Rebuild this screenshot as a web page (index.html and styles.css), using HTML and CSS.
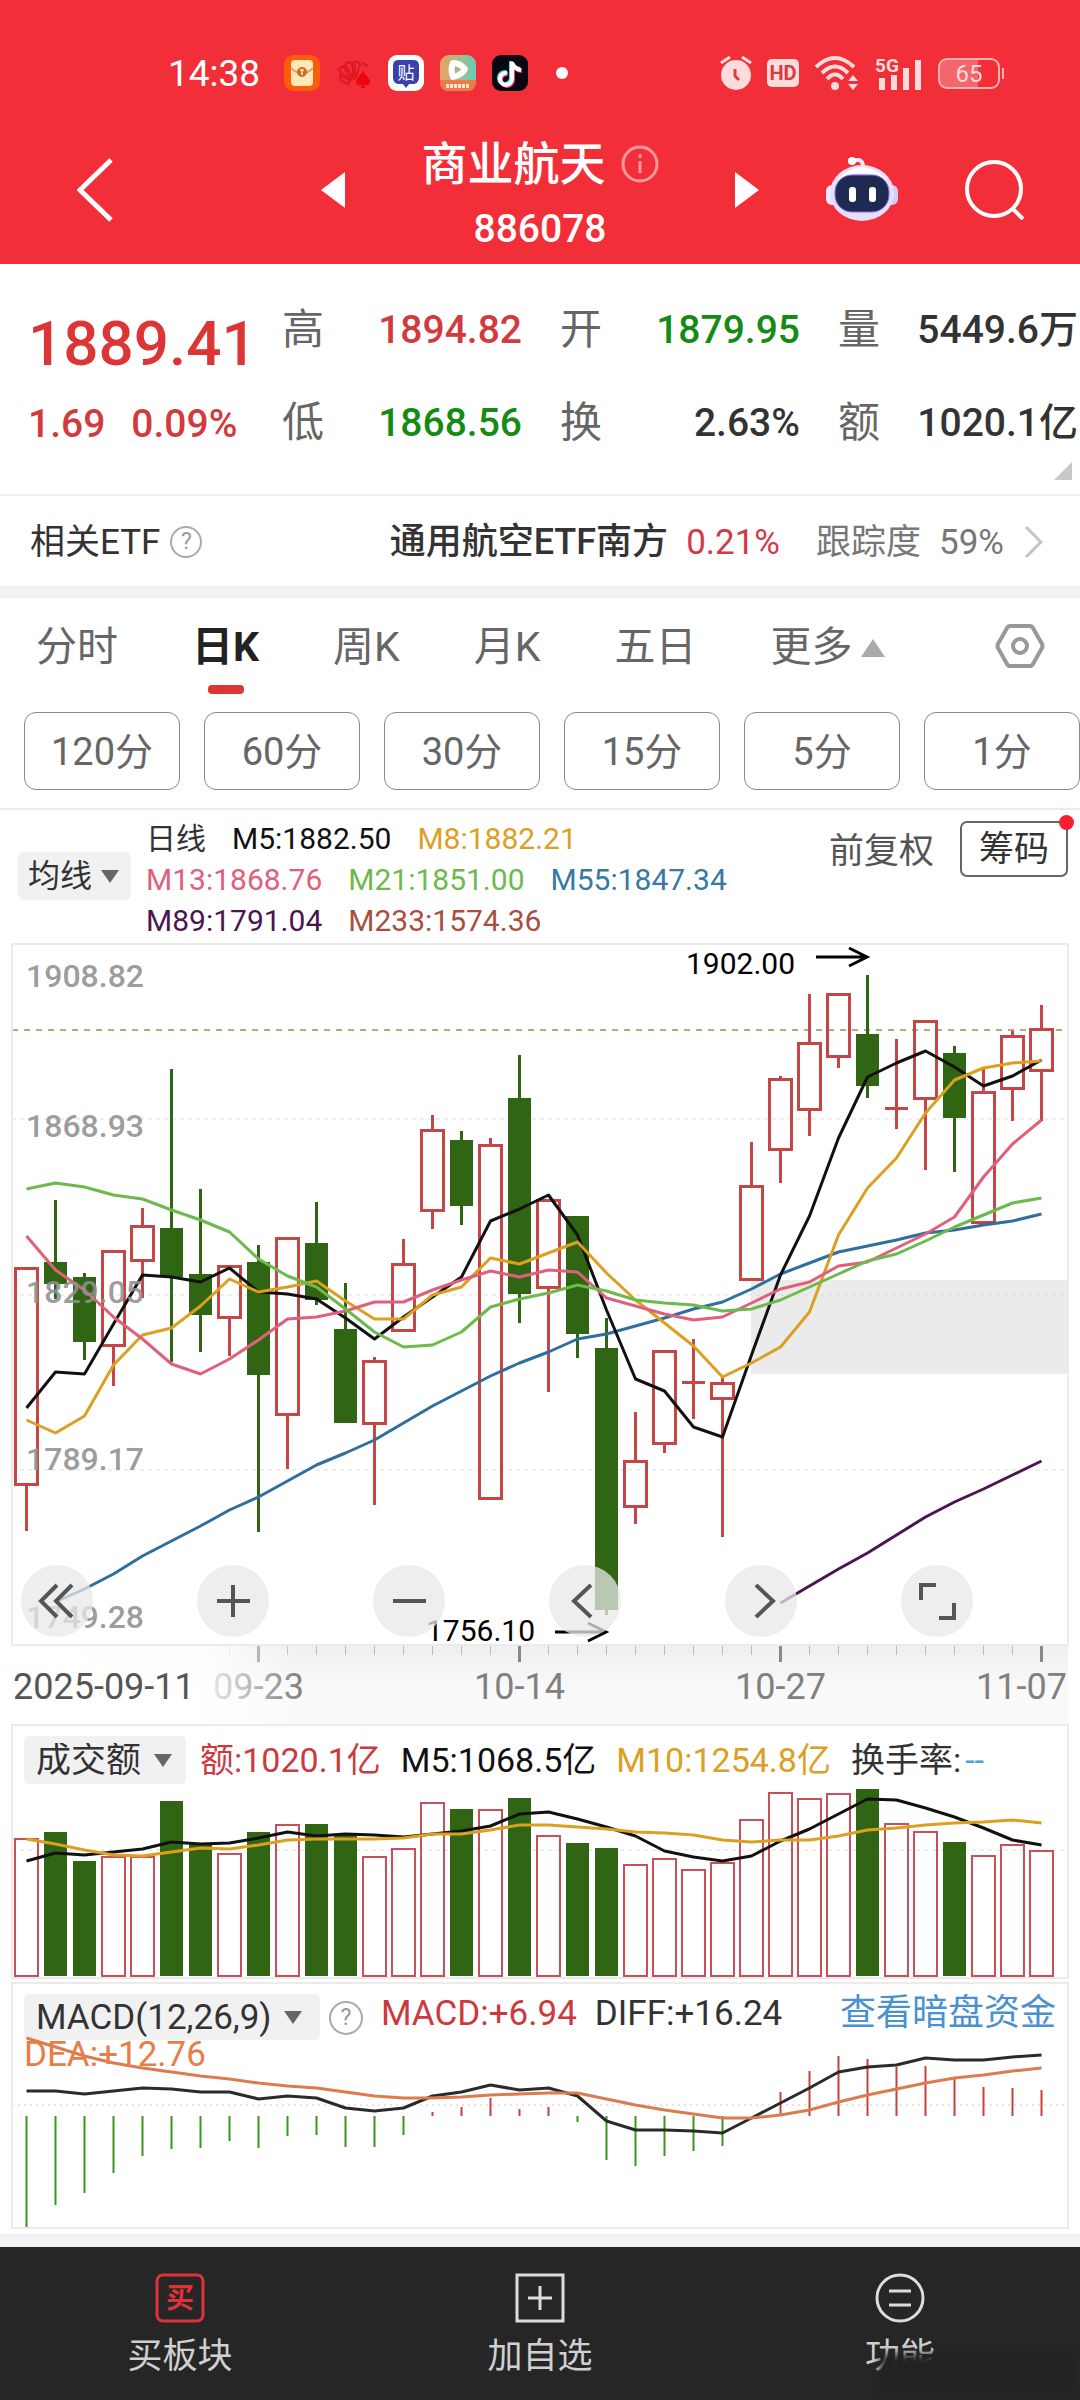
FILE: index.html
```html
<!DOCTYPE html>
<html lang="zh-CN">
<head>
    <meta charset="UTF-8">
    <meta name="viewport" content="width=device-width, initial-scale=1.0">
    <title>商业航天 886078</title>
    <link rel="stylesheet" href="styles.css">
</head>
<body>
    <header class="app-header">
        <div class="status-bar">
            <div class="status-left">
                <span class="clock">14:38</span>
                <svg class="app-icon" viewBox="0 0 36 36"><rect width="36" height="36" rx="9" fill="#fb5d0c"/><rect x="7" y="5" width="22" height="26" rx="4" fill="#ffe9b5"/><path d="M7 13 Q18 24 29 13" fill="none" stroke="#d9a45c" stroke-width="2"/><circle cx="18" cy="17" r="5" fill="#cf6a2b"/><path d="M16 15h4M18 15v5" stroke="#ffe9b5" stroke-width="1.5"/></svg>
                <svg class="app-icon" viewBox="0 0 36 36"><g fill="none" stroke="#e01525" stroke-width="2" stroke-linejoin="round"><path d="M12 29 L5 26 L4 20 L14 26Z"/><path d="M5 18 L3 14 L7 11 L16 25Z"/><path d="M9 10 L12 7 L16 8 L18 24Z"/><path d="M18 7 L23 7 L24 10 L20 22Z"/><path d="M26 8 L32 11"/></g><path d="M27 16 C24 21 20 23 20 27 c0 4 5 4 6 2 l-1 4h4l-1-4c1 2 6 2 6-2 0-4-4-6-7-11Z" fill="#ee0510"/></svg>
                <svg class="app-icon" viewBox="0 0 36 36"><rect width="36" height="36" rx="9" fill="#fff"/><path d="M10 5h16q5 0 5 6v11q0 6-5 7h-5l-3 4-3-4h-5q-5-1-5-7V11q0-6 5-6Z" fill="#3a3fae"/><text class="icon-char" x="18" y="24" text-anchor="middle">贴</text></svg>
                <svg class="app-icon" viewBox="0 0 36 36"><defs><linearGradient id="play" x1="0" y1="0" x2="1" y2="0"><stop offset="0" stop-color="#f0a062"/><stop offset="1" stop-color="#63d0b4"/></linearGradient></defs><rect width="36" height="36" rx="9" fill="url(#play)"/><path d="M0 25h36v2q0 9-9 9H9q-9 0-9-9Z" fill="#ee7a45"/><path d="M13 8 Q10 15 13 22 Q22 20 25 14 Q20 8 13 8Z" fill="none" stroke="#fff" stroke-width="6" stroke-linejoin="round"/><path d="M6 31h24" stroke="#ffe6d5" stroke-width="4" stroke-dasharray="3 1"/></svg>
                <svg class="app-icon" viewBox="0 0 36 36"><rect width="36" height="36" rx="9" fill="#0a0712"/><g fill="none" stroke-width="4"><path d="M19 6v17a6 6 0 1 1-5-6M19 7q2 6 9 7" stroke="#37e3df"/><path d="M21 8v17a6 6 0 1 1-5-6M21 9q2 6 9 7" stroke="#f5386a"/><path d="M20 7v17a6 6 0 1 1-5-6M20 8q2 6 9 7" stroke="#fff"/></g></svg>
                <span class="status-dot"></span>
            </div>
            <div class="status-right">
                <svg width="32" height="36" viewBox="0 0 32 36"><circle cx="16" cy="20" r="15" fill="#ffdcdc"/><path d="M1 8l9-6M31 8l-9-6" stroke="#ffdcdc" stroke-width="3"/><path d="M15 14v7l4 4" fill="none" stroke="#d93b41" stroke-width="3"/></svg>
                <span class="hd">HD</span>
                <svg width="46" height="36" viewBox="0 0 46 36"><g fill="none" stroke="#ffdcdc" stroke-width="4"><path d="M2 12Q21-6 40 12"/><path d="M8 18Q21 5 34 18"/><path d="M13 24Q21 15 29 24"/></g><circle cx="21" cy="31" r="4" fill="#ffdcdc"/><path d="M34 26l5-6 5 6zM34 29l5 6 5-6z" fill="#ffdcdc"/></svg>
                <svg width="48" height="36" viewBox="0 0 48 36"><path d="M4 23h6v12H4zM16 20h6v15h-6zM28 13h6v22h-6zM40 5h6v30h-6z" fill="#ffdcdc"/><text class="net" x="0" y="17">5G</text></svg>
                <span class="battery">65</span>
            </div>
        </div>

        <div class="title-bar">
            <div class="title-side">
                <button class="icon-btn" aria-label="返回"><svg width="36" height="64" viewBox="0 0 36 64"><path d="M34 2 L3 32 L34 62" fill="none" stroke="#fff" stroke-width="5"/></svg></button>
                <button class="icon-btn" aria-label="上一个"><svg width="24" height="36" viewBox="0 0 24 36"><path d="M24 0v36L0 18z" fill="#fff"/></svg></button>
            </div>
            <div class="title-main">
                <h1>商业航天
                    <svg width="38" height="38" viewBox="0 0 38 38"><circle cx="19" cy="19" r="17" fill="none" stroke="#ff9a9c" stroke-width="3"/><path d="M19 16v12M19 9v4" stroke="#ff9a9c" stroke-width="3"/></svg>
                </h1>
                <p>886078</p>
            </div>
            <div class="title-side">
                <button class="icon-btn" aria-label="下一个"><svg width="24" height="36" viewBox="0 0 24 36"><path d="M0 0v36l24-18z" fill="#fff"/></svg></button>
                <button class="icon-btn" aria-label="智能助手">
                    <svg width="72" height="70" viewBox="0 0 72 70">
                        <path d="M27 6 Q38 2 37 14" fill="none" stroke="#f3e9ff" stroke-width="4"/><circle cx="26" cy="6" r="4" fill="#fff"/>
                        <rect x="0" y="30" width="14" height="20" rx="6" fill="#f1edff"/><rect x="58" y="30" width="14" height="20" rx="6" fill="#d5cbf5"/>
                        <ellipse cx="36" cy="38" rx="32" ry="28" fill="#e4e0fb"/>
                        <path d="M12 24 Q36 0 60 24 Q36 12 12 24Z" fill="#fff"/>
                        <rect x="9" y="20" width="54" height="37" rx="17" fill="#1e2a50" stroke="#8b6be8" stroke-width="1"/>
                        <rect x="23" y="32" width="7" height="15" rx="3" fill="#fff"/><rect x="43" y="32" width="7" height="15" rx="3" fill="#fff"/>
                    </svg>
                </button>
                <button class="icon-btn" aria-label="搜索"><svg width="60" height="60" viewBox="0 0 60 60"><circle cx="29" cy="29" r="27" fill="none" stroke="#fff" stroke-width="4"/><path d="M47 48 L58 59" stroke="#fff" stroke-width="4"/></svg></button>
            </div>
        </div>
    </header>

    <main>
        <section class="quote">
            <div class="quote-price">
                <strong class="price-now">1889.41</strong>
                <div class="price-change"><span>1.69</span><span>0.09%</span></div>
            </div>
            <dl class="quote-col">
                <div><dt>高</dt><dd class="up">1894.82</dd></div>
                <div><dt>低</dt><dd class="down">1868.56</dd></div>
            </dl>
            <dl class="quote-col">
                <div><dt>开</dt><dd class="down">1879.95</dd></div>
                <div><dt>换</dt><dd>2.63%</dd></div>
            </dl>
            <dl class="quote-col">
                <div><dt>量</dt><dd>5449.6万</dd></div>
                <div><dt>额</dt><dd>1020.1亿</dd></div>
            </dl>
        </section>

        <a href="#etf" class="etf-row">
            <span>相关ETF</span>
            <span class="help">?</span>
            <span class="etf-name">通用航空ETF南方</span>
            <span class="etf-rate">0.21%</span>
            <span class="etf-track">跟踪度</span>
            <span class="etf-percent">59%</span>
            <svg width="19" height="32" viewBox="0 0 19 32"><path d="M2 1 L17 16 L2 31" fill="none" stroke="#c4c4c4" stroke-width="3"/></svg>
        </a>

        <nav class="tabs">
            <button>分时</button>
            <button class="active">日K</button>
            <button>周K</button>
            <button>月K</button>
            <button>五日</button>
            <button class="more">更多</button>
            <button class="settings" aria-label="设置"><svg width="50" height="46" viewBox="0 0 50 46"><path d="M15 3h20q2 0 3 2l9 16q1 2 0 4l-9 16q-1 2-3 2H15q-2 0-3-2L3 25q-1-2 0-4l9-16q1-2 3-2Z" fill="none" stroke="#999" stroke-width="4"/><circle cx="25" cy="23" r="7" fill="none" stroke="#999" stroke-width="4"/></svg></button>
        </nav>

        <div class="periods">
            <button>120分</button>
            <button>60分</button>
            <button>30分</button>
            <button>15分</button>
            <button>5分</button>
            <button>1分</button>
        </div>

        <section class="legend">
            <label class="pick"><select aria-label="主图指标"><option>均线</option></select></label>
            <div class="ma-list">
                <div class="ma-row"><span>日线</span><span class="c-black">M5:1882.50</span><span class="c-gold">M8:1882.21</span></div>
                <div class="ma-row"><span class="c-pink">M13:1868.76</span><span class="c-green">M21:1851.00</span><span class="c-blue">M55:1847.34</span></div>
                <div class="ma-row"><span class="c-purple">M89:1791.04</span><span class="c-brown">M233:1574.36</span></div>
            </div>
            <button class="adjust">前复权</button>
            <button class="chips">筹码</button>
        </section>

        <section class="chart-panel">
            <svg id="kChart" viewBox="0 0 1056 701"></svg>
            <div class="chart-tools">
                <button aria-label="最早"><svg viewBox="0 0 72 72"><path d="M36 20 L20 36 L36 52M51 20 L35 36 L51 52"/></svg></button>
                <button aria-label="放大"><svg viewBox="0 0 72 72"><path d="M36 20v32M20 36h33"/></svg></button>
                <button aria-label="缩小"><svg viewBox="0 0 72 72"><path d="M20 36h33"/></svg></button>
                <button aria-label="左移"><svg viewBox="0 0 72 72"><path d="M42 20 L25 36 L42 52"/></svg></button>
                <button aria-label="右移"><svg viewBox="0 0 72 72"><path d="M31 20 L48 36 L31 52"/></svg></button>
                <button aria-label="全屏"><svg viewBox="0 0 72 72"><path d="M20 35V20h15M38 53h15V38"/></svg></button>
            </div>
        </section>
        <svg id="axis" class="axis" viewBox="0 0 1056 79"></svg>

        <section class="chart-panel vol-panel">
            <div class="panel-head">
                <label class="pick"><select aria-label="副图一"><option>成交额</option></select></label>
                <span class="c-red">额:1020.1亿</span>
                <span class="c-black">M5:1068.5亿</span>
                <span class="c-gold">M10:1254.8亿</span>
                <span class="turnover">换手率:<span class="dashes">--</span></span>
            </div>
            <svg id="volChart" viewBox="0 0 1056 193"></svg>
        </section>

        <section class="chart-panel macd-panel">
            <div class="panel-head">
                <label class="pick"><select aria-label="副图二"><option>MACD(12,26,9)</option></select></label>
                <span class="help">?</span>
                <span class="c-red">MACD:+6.94</span>
                <span class="diff">DIFF:+16.24</span>
                <a href="#funds">查看暗盘资金</a>
            </div>
            <svg id="macdChart" viewBox="0 0 1056 195"></svg>
        </section>
    </main>

    <footer class="bottom-nav">
        <button>
            <svg width="50" height="50" viewBox="0 0 50 50"><rect x="2" y="2" width="46" height="46" rx="6" fill="none" stroke="#e0323b" stroke-width="3"/><text class="buy-char" x="25" y="35" text-anchor="middle">买</text></svg>
            买板块
        </button>
        <button>
            <svg width="50" height="50" viewBox="0 0 50 50"><path d="M2 2h46v46H2zM25 13v24M13 25h24" fill="none" stroke="#dcdcdc" stroke-width="3"/></svg>
            加自选
        </button>
        <button>
            <svg width="50" height="50" viewBox="0 0 50 50"><circle cx="25" cy="25" r="23" fill="none" stroke="#dcdcdc" stroke-width="3"/><path d="M14 18h22M14 32h22" stroke="#dcdcdc" stroke-width="3"/></svg>
            功能
        </button>
        <span class="nav-shade"></span>
    </footer>

    <script src="script.js"></script>
</body>
</html>
```

FILE: styles.css
```css
* {
    margin: 0;
    padding: 0;
    box-sizing: border-box;
}

body {
    font-family: Roboto, "Noto Sans CJK SC", sans-serif;
    background: #fff;
    color: #333;
    line-height: 1;
}

button, select {
    font: inherit;
    color: inherit;
    background: none;
    border: none;
}

a {
    color: inherit;
    text-decoration: none;
}

svg {
    display: block;
}

/* header */
.app-header {
    background: #f22f38;
    color: #fff;
    height: 264px;
    padding-top: 51px;
}

.status-bar {
    display: flex;
    justify-content: space-between;
    align-items: center;
    height: 44px;
    padding: 0 80px 0 168px;
}

.status-left, .status-right {
    display: flex;
    align-items: center;
}

.status-left {
    gap: 16px;
}

.clock {
    font-size: 37px;
    margin-right: 8px;
}

.app-icon {
    width: 36px;
    height: 36px;
}

.icon-char {
    font-size: 17px;
    fill: #fff;
}

.status-dot {
    width: 12px;
    height: 12px;
    margin-left: 12px;
    border-radius: 50%;
    background: #fff;
}

.status-right {
    gap: 15px;
    color: #ffdcdc;
}

.hd {
    width: 32px;
    height: 28px;
    border-radius: 5px;
    background: #ffdcdc;
    color: #d93b41;
    font-size: 20px;
    font-weight: 700;
    line-height: 28px;
    text-align: center;
}

.net {
    font-size: 19px;
    font-weight: 700;
    fill: #ffdcdc;
}

.battery {
    position: relative;
    width: 62px;
    height: 31px;
    border: 2px solid #ffb3b5;
    border-radius: 9px;
    background: linear-gradient(90deg, #f5666c 65%, transparent 65%);
    font-size: 24px;
    line-height: 28px;
    text-align: center;
}

.battery::after {
    content: "";
    position: absolute;
    top: 8px;
    right: -6px;
    width: 2px;
    height: 11px;
    background: #ffb3b5;
}

.title-bar {
    display: grid;
    grid-template-columns: 268px 1fr 290px;
    align-items: center;
    height: 160px;
    margin-top: 15px;
    padding: 0 55px 0 77px;
}

.title-side {
    display: flex;
    align-items: center;
    justify-content: space-between;
}

.title-main {
    padding-top: 8px;
    text-align: center;
}

.title-main h1 {
    display: flex;
    align-items: center;
    justify-content: center;
    gap: 15px;
    font-size: 46px;
    font-weight: 500;
    line-height: 60px;
}

.title-main p {
    margin-top: 9px;
    font-size: 39px;
    font-weight: 500;
    line-height: 52px;
}

/* quote */
.quote {
    position: relative;
    display: grid;
    grid-template-columns: minmax(0, 1fr) 240px 240px 240px;
    column-gap: 38px;
    height: 232px;
    padding: 34px 2px 0 28px;
    border-bottom: 2px solid #eee;
}

.quote::after {
    content: "";
    position: absolute;
    right: 8px;
    bottom: 14px;
    border-left: 18px solid transparent;
    border-bottom: 18px solid #c8c8c8;
}

.price-now {
    display: block;
    font-size: 62px;
    font-weight: 500;
    line-height: 92px;
    color: #dd3435;
}

.price-change {
    display: flex;
    gap: 26px;
    font-size: 39px;
    font-weight: 500;
    line-height: 68px;
    white-space: nowrap;
    color: #d23a3d;
}

.quote-col div {
    display: flex;
    justify-content: space-between;
    height: 93px;
    line-height: 64px;
}

.quote-col dt {
    font-size: 42px;
    color: #666;
}

.quote-col dd {
    font-size: 39px;
    font-weight: 500;
}

.quote-col .up {
    color: #d23a3d;
}

.quote-col .down {
    color: #148c14;
}

/* related etf */
.etf-row {
    display: flex;
    align-items: center;
    height: 102px;
    padding: 2px 37px 0 30px;
    border-bottom: 12px solid #f3f3f3;
    font-size: 35px;
}

.help {
    width: 32px;
    height: 32px;
    border: 2px solid #aaa;
    border-radius: 50%;
    font-size: 23px;
    line-height: 28px;
    text-align: center;
    color: #999;
}

.etf-row .help {
    margin-left: 10px;
}

.etf-name {
    margin-left: auto;
    font-size: 36px;
    font-weight: 500;
}

.etf-rate {
    margin-left: 18px;
    color: #d23a4a;
}

.etf-track {
    margin-left: 36px;
    color: #777;
}

.etf-percent {
    margin: 0 20px 0 18px;
    color: #777;
}

/* tabs */
.tabs {
    display: flex;
    align-items: center;
    gap: 74px;
    height: 96px;
    padding: 0 35px 0 36px;
    font-size: 41px;
    color: #666;
}

.tabs button {
    position: relative;
    height: 96px;
    padding-top: 3px;
}

.tabs .active {
    color: #222;
    font-weight: 700;
}

.tabs .active::after {
    content: "";
    position: absolute;
    bottom: 0;
    left: 50%;
    width: 36px;
    height: 9px;
    margin-left: -18px;
    border-radius: 4px;
    background: #dd3435;
}

.tabs .more {
    display: flex;
    align-items: center;
    gap: 8px;
}

.more::after {
    content: "";
    border: 12px solid transparent;
    border-top: none;
    border-bottom: 18px solid #aaa;
}

.tabs .settings {
    margin-left: auto;
    padding-top: 0;
}

/* minute periods */
.periods {
    display: flex;
    gap: 24px;
    padding: 18px 0 18px 24px;
    overflow: hidden;
    border-bottom: 2px solid #eaeaea;
}

.periods button {
    flex: 0 0 156px;
    height: 78px;
    padding-top: 2px;
    border: 1px solid #888;
    border-radius: 12px;
    font-size: 38px;
    color: #666;
}

/* drop-downs */
.pick {
    display: flex;
    align-items: center;
    gap: 8px;
    height: 48px;
    padding: 0 12px 0 10px;
    border-radius: 5px;
    background: #f1f1f1;
}

.pick select {
    appearance: none;
    color: #333;
}

.pick::after {
    content: "";
    border: 9px solid transparent;
    border-bottom: none;
    border-top: 13px solid #666;
}

/* moving average legend */
.legend {
    display: flex;
    align-items: flex-start;
    height: 134px;
    padding: 8px 12px 0 18px;
    font-size: 30px;
}

.legend .pick {
    margin-top: 34px;
    font-size: 32px;
}

.ma-list {
    margin-left: 15px;
}

.ma-row {
    display: flex;
    gap: 26px;
    height: 41px;
    line-height: 41px;
}

.adjust {
    margin: 16px 26px 0 auto;
    font-size: 35px;
    color: #555;
}

.chips {
    position: relative;
    width: 108px;
    height: 56px;
    margin-top: 3px;
    border: 2px solid #666;
    border-radius: 7px;
    font-size: 35px;
}

.chips::after {
    content: "";
    position: absolute;
    top: -8px;
    right: -8px;
    width: 15px;
    height: 15px;
    border-radius: 50%;
    background: #f8202f;
}

.c-black { color: #111; }
.c-gold { color: #dba01f; }
.c-pink { color: #e0607b; }
.c-green { color: #6cba4c; }
.c-blue { color: #3878a4; }
.c-purple { color: #4b1650; }
.c-brown { color: #a84f3e; }
.c-red { color: #cc3a3e; }

/* charts */
.chart-panel {
    position: relative;
    margin: 0 12px;
    outline: 2px solid #ebebeb;
    outline-offset: -1px;
}

.chart-panel > svg {
    width: 100%;
    height: auto;
}

.chart-tools {
    position: absolute;
    left: 9px;
    right: 95px;
    bottom: 8px;
    display: flex;
    justify-content: space-between;
}

.chart-tools button {
    width: 72px;
    height: 72px;
    border-radius: 50%;
    background: rgba(232, 232, 232, 0.75);
}

.chart-tools path {
    fill: none;
    stroke: #555;
    stroke-width: 4;
}

.axis {
    width: calc(100% - 24px);
    margin: 0 12px;
    background: linear-gradient(180deg, #efefef, #fafafa 60%);
}

.panel-head {
    display: flex;
    align-items: center;
    height: 60px;
    padding: 10px 12px 0;
    font-size: 35px;
    white-space: nowrap;
}

.panel-head .pick {
    gap: 12px;
    padding: 0 14px 0 12px;
}

.vol-panel {
    margin-top: 1px;
}

.vol-panel .panel-head {
    font-size: 34px;
}

.vol-panel .pick {
    margin-right: 14px;
    font-size: 35px;
}

.vol-panel .c-black, .vol-panel .c-gold, .turnover {
    margin-left: 20px;
}

.dashes {
    margin-left: 4px;
    color: #4aa3d0;
}

.macd-panel {
    margin-top: 5px;
}

.macd-panel .panel-head {
    height: 50px;
    padding-top: 0;
    align-items: flex-start;
    line-height: 61px;
}

.macd-panel .pick {
    height: 46px;
    margin-top: 11px;
    padding-right: 18px;
}

.macd-panel .help {
    width: 34px;
    height: 34px;
    margin: 18px 18px 0 9px;
    line-height: 30px;
}

.macd-panel .diff {
    margin-left: 18px;
}

.macd-panel a {
    margin-left: auto;
    font-size: 36px;
    color: #4b91cf;
}

.axis-price {
    font-size: 32px;
    font-weight: 500;
    fill: #909090;
    fill-opacity: 0.9;
}

.mark-price {
    font-size: 30px;
    fill: #000;
}

.axis-date {
    font-size: 36px;
    fill: #808080;
}

.axis-date.first {
    fill: #555;
}

.dea {
    font-size: 35px;
    fill: #e87d48;
}

/* bottom nav */
.bottom-nav {
    position: relative;
    display: flex;
    height: 166px;
    margin-top: 6px;
    border-top: 13px solid #f3f3f3;
    background: #262626;
    overflow: hidden;
}

.bottom-nav button {
    flex: 1;
    display: flex;
    flex-direction: column;
    align-items: center;
    gap: 16px;
    padding-top: 26px;
    font-size: 35px;
    color: #d0d0d0;
}

.buy-char {
    font-size: 28px;
    font-weight: 700;
    fill: #e0323b;
}

.nav-shade {
    position: absolute;
    right: 4px;
    bottom: 8px;
    width: 196px;
    height: 38px;
    background: #222;
    filter: blur(4px);
}
```

FILE: script.js
```js
const STEP = 29;
const FIRST = 14.5;
const RED = '#c44646';
const GREEN = '#306613';
const x = i => FIRST + STEP * i;

// [up?, wick top, body top, body bottom, wick bottom]
const candles = [
    [1, 323, 323, 542, 587], [0, 256, 318, 340, 355], [0, 329, 333, 398, 416], [1, 306, 306, 403, 442],
    [1, 264, 281, 318, 354], [0, 125, 284, 333, 418], [0, 245, 330, 371, 408], [1, 321, 321, 375, 412],
    [0, 301, 318, 431, 588], [1, 293, 293, 472, 525], [0, 258, 299, 356, 361], [0, 339, 385, 479, 479],
    [1, 413, 416, 481, 561], [1, 295, 319, 388, 388], [1, 171, 185, 268, 285], [0, 187, 196, 262, 281],
    [1, 194, 200, 556, 556], [0, 111, 154, 350, 379], [1, 255, 255, 345, 448], [0, 272, 272, 390, 414],
    [0, 374, 404, 666, 671], [1, 468, 516, 564, 580], [1, 406, 406, 501, 509], [1, 395, 437, 440, 475],
    [1, 431, 438, 456, 593], [1, 198, 241, 337, 337], [1, 132, 134, 207, 239], [1, 50, 98, 167, 192],
    [1, 49, 49, 114, 124], [0, 31, 90, 142, 154], [1, 95, 163, 166, 185], [1, 76, 76, 156, 226],
    [0, 102, 109, 174, 228], [1, 125, 147, 280, 280], [1, 87, 91, 146, 177], [1, 61, 84, 128, 177]
];

const ma = [
    { color: '#306f9c', from: 1, y: [658, 645, 630, 612, 597, 582, 566, 553, 537, 521, 509, 496, 479, 462, 447, 432, 419, 408, 395, 390, 382, 374, 365, 358, 345, 330, 319, 308, 302, 296, 289, 286, 281, 277, 270] },
    { color: '#4b1650', from: 26, y: [659, 642, 625, 609, 591, 573, 558, 545, 531, 517] },
    { color: '#111', from: 0, y: [464, 428, 430, 380, 331, 333, 338, 324, 348, 350, 355, 374, 395, 373, 353, 333, 277, 265, 251, 291, 366, 435, 447, 483, 493, 411, 331, 272, 194, 133, 119, 107, 123, 142, 132, 116] },
    { color: '#dba01f', from: 0, y: [476, 489, 472, 421, 391, 384, 362, 335, 348, 343, 337, 357, 375, 375, 351, 343, 314, 320, 309, 298, 329, 356, 379, 402, 433, 419, 403, 368, 291, 244, 214, 169, 136, 124, 119, 117] },
    { color: '#e0607b', from: 0, y: [292, 326, 346, 373, 395, 420, 430, 415, 396, 375, 373, 367, 358, 358, 346, 336, 327, 333, 326, 328, 354, 362, 370, 376, 373, 359, 345, 338, 322, 318, 304, 290, 273, 233, 200, 176] },
    { color: '#6cba4c', from: 0, y: [245, 239, 243, 251, 255, 266, 276, 288, 315, 332, 343, 365, 388, 403, 401, 388, 363, 355, 349, 341, 347, 356, 359, 361, 367, 365, 356, 343, 330, 317, 310, 297, 283, 271, 259, 254] }
];

const volTop = [53, 47, 76, 71, 71, 16, 59, 68, 47, 39, 39, 50, 71, 63, 17, 24, 24, 13, 50, 58, 63, 79, 73, 84, 77, 34, 7, 13, 8, 4, 38, 46, 57, 70, 59, 65];
const volM5 = [76, 68, 70, 67, 64, 57, 59, 58, 53, 47, 51, 49, 50, 52, 49, 46, 41, 29, 27, 34, 42, 51, 66, 72, 76, 71, 56, 44, 29, 14, 15, 23, 32, 43, 55, 60];
const volM10 = [54, 59, 65, 70, 71, 67, 63, 64, 60, 55, 54, 54, 54, 53, 49, 49, 45, 40, 40, 42, 44, 47, 48, 50, 55, 57, 55, 55, 51, 45, 43, 40, 38, 37, 35, 38];

const macd = [194, 172, 160, 140, 123, 116, 115, 108, 115, 103, 102, 114, 114, 102, 79, 74, 65, 76, 74, 89, 127, 133, 123, 118, 113, 83, 59, 38, 23, 26, 34, 33, 45, 54, 55, 57];
const diff = [58, 58, 61, 58, 55, 56, 59, 59, 66, 63, 65, 75, 78, 75, 63, 59, 52, 57, 55, 63, 88, 97, 97, 98, 100, 85, 70, 55, 39, 34, 32, 25, 27, 27, 24, 22];
const dea = [5, 14, 23, 30, 35, 39, 43, 46, 50, 53, 55, 59, 63, 65, 65, 64, 62, 61, 60, 60, 66, 72, 77, 81, 85, 85, 82, 77, 69, 62, 56, 50, 45, 42, 38, 35];

function line(ys, color, from = 0, width = 3) {
    const points = ys.map((y, i) => `${x(from + i)},${y}`).join(' ');
    return `<polyline points="${points}" fill="none" stroke="${color}" stroke-width="${width}" stroke-linejoin="round"/>`;
}

function grid(y, color = '#ddd', dash = '4 4') {
    return `<path d="M0 ${y}H1056" stroke="${color}" stroke-width="1" stroke-dasharray="${dash}"/>`;
}

function candle([up, wickTop, top, bottom, wickBottom], i) {
    const cx = x(i);
    if (!up) {
        return `<path d="M${cx} ${wickTop}V${wickBottom}" stroke="${GREEN}" stroke-width="3"/>
            <rect x="${cx - 11.5}" y="${top}" width="23" height="${bottom - top}" fill="${GREEN}"/>`;
    }
    const wick = `<path d="M${cx} ${wickTop}V${top}M${cx} ${bottom}V${wickBottom}" stroke="${RED}" stroke-width="3"/>`;
    if (bottom - top < 5) {
        return wick + `<path d="M${cx - 11.5} ${top + 1.5}h23" stroke="${RED}" stroke-width="3"/>`;
    }
    return wick + `<rect x="${cx - 11}" y="${top + 1.5}" width="22" height="${bottom - top - 3}" fill="none" stroke="${RED}" stroke-width="3"/>`;
}

function drawK() {
    let out = '<rect x="739" y="336" width="317" height="94" fill="#ebebeb"/>';
    out += [175, 351, 526].map(y => grid(y)).join('');
    out += '<path d="M0 86H1056" stroke="#b5ab79" stroke-width="2" stroke-dasharray="6 6"/>';
    out += candles.map(candle).join('');
    out += ma.map(m => line(m.y, m.color, m.from)).join('');
    const labels = [['1908.82', 43], ['1868.93', 193], ['1829.05', 359], ['1789.17', 526], ['1749.28', 684]];
    out += labels.map(([t, y]) => `<text class="axis-price" x="14" y="${y}">${t}</text>`).join('');
    out += '<text class="mark-price" x="674" y="30">1902.00</text><text class="mark-price" x="414" y="697">1756.10</text>';
    out += '<path d="M804 13h50M837 4l18 9l-18 9M543 688h50M576 679l18 9l-18 9" fill="none" stroke="#000" stroke-width="3"/>';
    document.getElementById('kChart').innerHTML = out;
}

function drawAxis() {
    let out = `<defs><linearGradient id="fade"><stop offset="0" stop-color="#fff"/><stop offset="0.65" stop-color="#fff" stop-opacity="0.9"/><stop offset="1" stop-color="#fff" stop-opacity="0"/></linearGradient></defs>`;
    for (let i = 7; i < 36; i++) {
        const major = i % 9 === 8;
        out += `<path d="M${x(i)} 1v${major ? 16 : 9}" stroke="${major ? '#888' : '#bbb'}" stroke-width="${major ? 3 : 1}"/>`;
    }
    out += [['09-23', 8], ['10-14', 17], ['10-27', 26]].map(([t, i]) => `<text class="axis-date" x="${x(i)}" y="54" text-anchor="middle">${t}</text>`).join('');
    out += '<text class="axis-date" x="1055" y="54" text-anchor="end">11-07</text>';
    out += '<rect width="290" height="79" fill="url(#fade)"/>';
    out += '<text class="axis-date first" x="1" y="54">2025-09-11</text>';
    document.getElementById('axis').innerHTML = out;
}

function drawVolume() {
    let out = grid(65);
    out += volTop.map((top, i) => candles[i][0]
        ? `<rect x="${x(i) - 11.5}" y="${top + 1}" width="23" height="${190 - top}" fill="none" stroke="#c95058" stroke-width="2"/>`
        : `<rect x="${x(i) - 11.5}" y="${top}" width="23" height="${191 - top}" fill="${GREEN}"/>`).join('');
    out += line(volM5, '#111') + line(volM10, '#dba01f');
    document.getElementById('volChart').innerHTML = out;
}

function drawMacd() {
    let out = grid(72, '#ccc', '2 4');
    out += macd.map((y, i) => `<path d="M${x(i)} 83V${y}" stroke="${y < 83 ? '#c9403c' : '#38961f'}" stroke-width="2"/>`).join('');
    out += line(diff, '#2b2b2b') + line(dea, '#de7b4e');
    out += '<text class="dea" x="12" y="33">DEA:+12.76</text>';
    document.getElementById('macdChart').innerHTML = out;
}

drawK();
drawAxis();
drawVolume();
drawMacd();
```
